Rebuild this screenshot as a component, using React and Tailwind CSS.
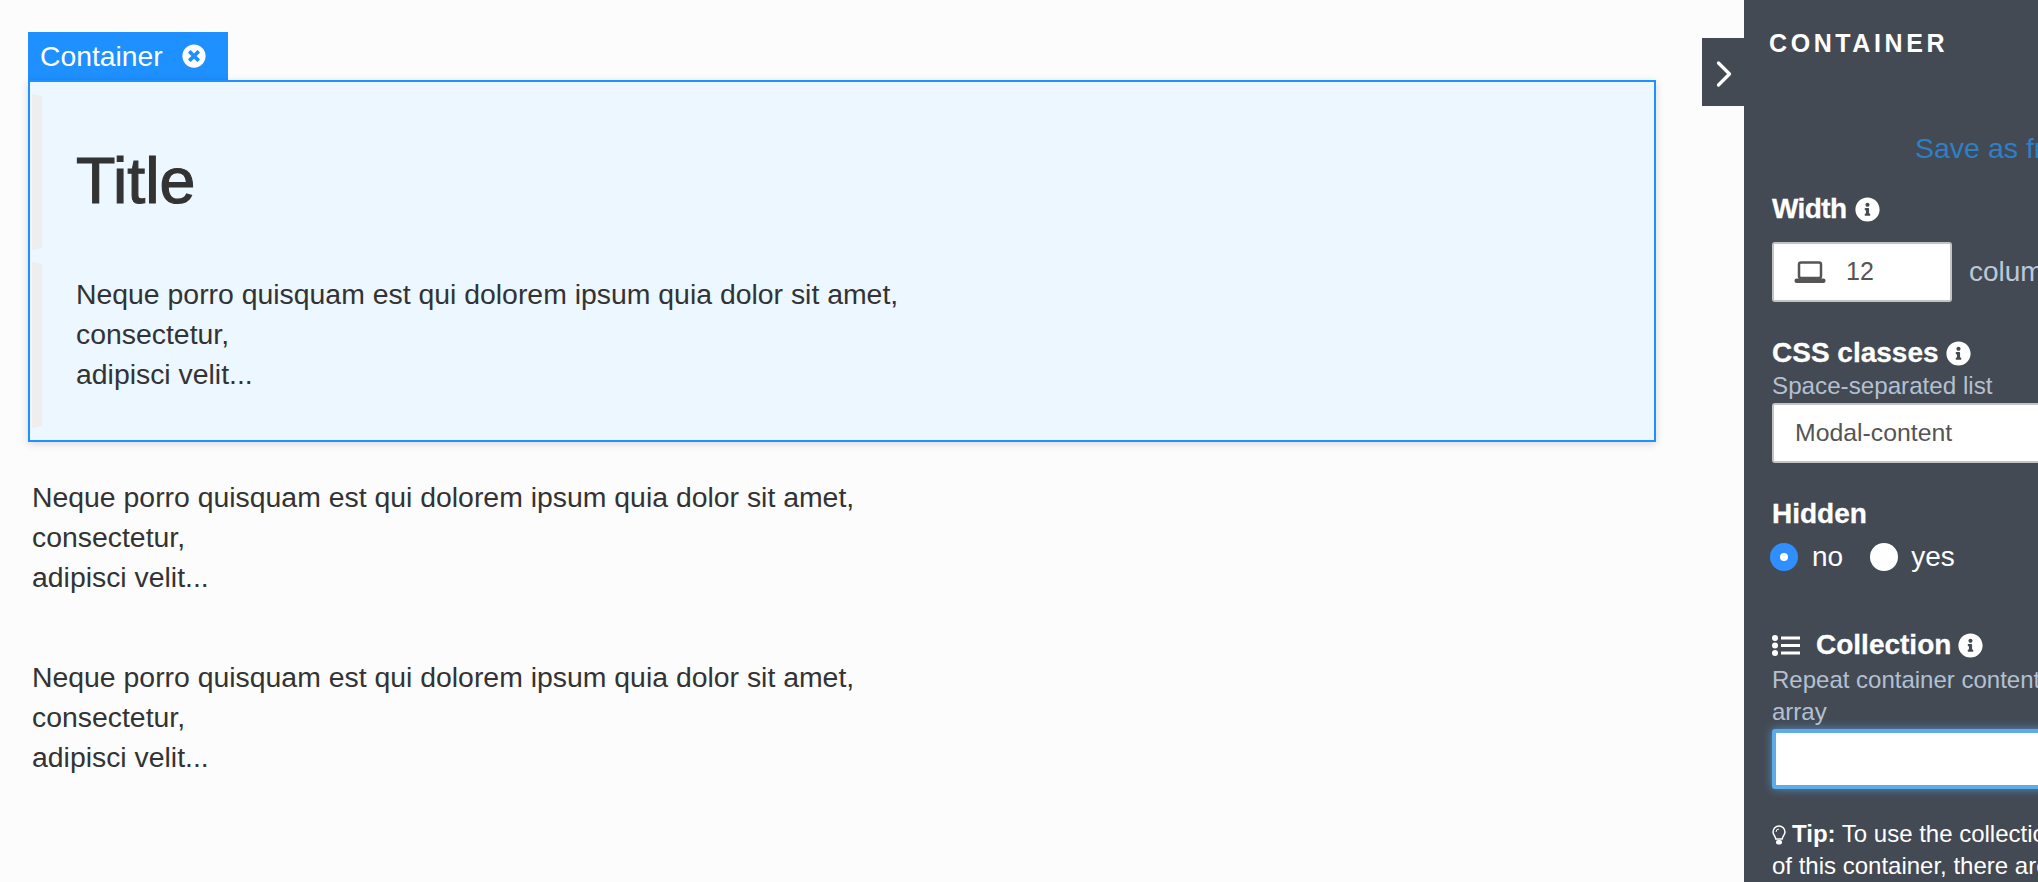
import React from "react";
import { FaInfoCircle, FaTimesCircle } from "react-icons/fa";
import { ChevronRight } from "lucide-react";

const Lines = () => (
  <>
    Neque porro quisquam est qui dolorem ipsum quia dolor sit amet,
    <br />
    consectetur,
    <br />
    adipisci velit...
  </>
);

const Info = () => <FaInfoCircle className="inline-block shrink-0 w-[25px] h-[25px] text-white" />;

const Label = ({ children, className = "" }) => (
  <div className={`flex items-center gap-[7px] text-[28px] leading-[30px] font-bold text-white whitespace-nowrap [-webkit-text-stroke:0.3px_#fff] ${className}`}>
    {children}
  </div>
);

const LaptopIcon = () => (
  <svg viewBox="0 0 32 22" className="w-[32px] h-[22px] text-[#555]" fill="none">
    <rect x="5" y="1.500" width="22" height="15.500" rx="2" stroke="currentColor" strokeWidth="2.500" />
    <rect x="0.5" y="17.500" width="31" height="4.500" rx="2" fill="currentColor" />
  </svg>
);

const ListIcon = () => (
  <svg viewBox="0 0 28 21" className="w-[28px] h-[21px] text-white" fill="currentColor">
    <circle cx="3" cy="3" r="3" />
    <circle cx="3" cy="10.5" r="3" />
    <circle cx="3" cy="18" r="3" />
    <rect x="9" y="1.5" width="19" height="3" />
    <rect x="9" y="9" width="19" height="3" />
    <rect x="9" y="16.5" width="19" height="3" />
  </svg>
);

const BulbIcon = () => (
  <svg viewBox="0 0 14 20" className="inline-block w-[14px] h-[20px] mr-[6px] align-[-3px] text-white">
    <path d="M7 1a6 6 0 0 0-6 6c0 2.6 2.2 3.8 2.8 7h6.4C10.800 10.800 13 9.600 13 7a6 6 0 0 0-6-6z" fill="none" stroke="currentColor" strokeWidth="1.500" />
    <path d="M7 4a3 3 0 0 0-3 3" fill="none" stroke="currentColor" strokeWidth="1" />
    <rect x="4" y="15" width="6" height="4.500" rx="2" fill="currentColor" />
  </svg>
);

const Sidebar = () => (
  <aside className="relative w-[294px] shrink-0 h-[882px] bg-[#434a54]">
    <div className="absolute left-[-42px] top-[38px] w-[42px] h-[68px] bg-[#434a54] flex items-center justify-center pl-[2px] pt-[4px]">
      <ChevronRight className="w-[44px] h-[44px] shrink-0 text-white" strokeWidth={1.800} />
    </div>
    <div className="h-full overflow-hidden pl-[28px]">
      <div className="w-[620px]">
        <h2 className="-ml-[3px] pt-[28px] text-[25px] leading-[30px] font-bold tracking-[3.6px] text-white">CONTAINER</h2>
        <div className="mt-[74px] ml-[143px] text-[28.5px] leading-[32px] text-[#2f7fc6] whitespace-nowrap">Save as fragment</div>
        <Label className="mt-[30px]">
          <span className="tracking-[-0.6px] mr-[1px]">Width</span> <Info />
        </Label>
        <div className="mt-[18px] flex items-center">
          <div className="w-[180px] h-[60px] bg-white rounded-[3px] border-2 border-[#c4c4c4] flex items-center pl-[20px]">
            <LaptopIcon />
            <span className="ml-[20px] text-[25px] text-[#555]">12</span>
          </div>
          <span className="ml-[17px] text-[28px] text-[#bcc8d8]">columns</span>
        </div>
        <Label className="mt-[36px]">
          CSS classes <Info />
        </Label>
        <div className="mt-[3px] text-[24.2px] leading-[30px] text-[#b4c0d0]">Space-separated list</div>
        <div className="mt-[2px] w-[600px] h-[60px] bg-white rounded-[3px] border-2 border-[#c4c4c4] flex items-center pl-[21px] text-[24.800px] text-[#555]">
          Modal-content
        </div>
        <Label className="mt-[36px]">Hidden</Label>
        <div className="mt-[11px] -ml-[2px] flex items-center text-[28px] leading-[34px] text-white">
          <span className="w-[28px] h-[28px] rounded-full bg-[#2f8fff] flex items-center justify-center">
            <span className="w-[8px] h-[8px] rounded-full bg-white" />
          </span>
          <span className="ml-[14px]">no</span>
          <span className="ml-[27px] w-[28px] h-[28px] rounded-full bg-white" />
          <span className="ml-[13px]">yes</span>
        </div>
        <Label className="mt-[56px]">
          <span className="mr-[9px]"><ListIcon /></span>
          Collection <Info />
        </Label>
        <div className="mt-[4px] text-[24px] leading-[32px] text-[#b4c0d0] whitespace-nowrap">
          Repeat container content for each item in
          <br />
          array
        </div>
        <div className="mt-[1px] w-[600px] h-[60px] bg-white rounded-[3px] border-4 border-[#5dabe9] shadow-[0_0_10px_rgba(93,171,233,0.7)]" />
        <div className="mt-[29px] text-[24px] leading-[32px] text-white whitespace-nowrap">
          <BulbIcon />
          <b>Tip:</b> To use the collection data inside
          <br />
          of this container, there are some variables
        </div>
      </div>
    </div>
  </aside>
);

export default function App() {
  return (
    <div className="flex w-[2038px] h-[882px] overflow-hidden bg-[#fcfcfc] text-[#333] font-['Liberation_Sans',Arial,sans-serif]">
      <main className="flex-1 pl-[28px] pt-[32px]">
        <div className="w-[200px] h-[48px] bg-[#1e90ff] flex items-center pl-[12px] text-white text-[28.3px]">
          Container
          <FaTimesCircle className="ml-[19px] w-[24px] h-[24px]" />
        </div>
        <div className="w-[1628px] h-[362px] bg-[#ecf7ff] border-2 border-[#1e90ff] shadow-[0_2px_8px_rgba(0,0,0,0.15)] pl-[2px] pt-[12px]">
          <div className="h-[156px] border-l-[10px] border-y-2 border-l-[#eeeeee] border-y-transparent pl-[34px] pt-[49px]">
            <h1 className="text-[64.5px] leading-[72px] [-webkit-text-stroke:1.2px_#333]">Title</h1>
          </div>
          <div className="mt-[12px] h-[166px] border-l-[10px] border-y-2 border-l-[#eeeeee] border-y-transparent pl-[34px] pt-[10px] text-[28.4px] leading-[40px] whitespace-nowrap">
            <Lines />
          </div>
        </div>
        <p className="mt-[35px] ml-[4px] text-[28.4px] leading-[40px] whitespace-nowrap">
          <Lines />
        </p>
        <p className="mt-[60px] ml-[4px] text-[28.4px] leading-[40px] whitespace-nowrap">
          <Lines />
        </p>
      </main>
      <Sidebar />
    </div>
  );
}
